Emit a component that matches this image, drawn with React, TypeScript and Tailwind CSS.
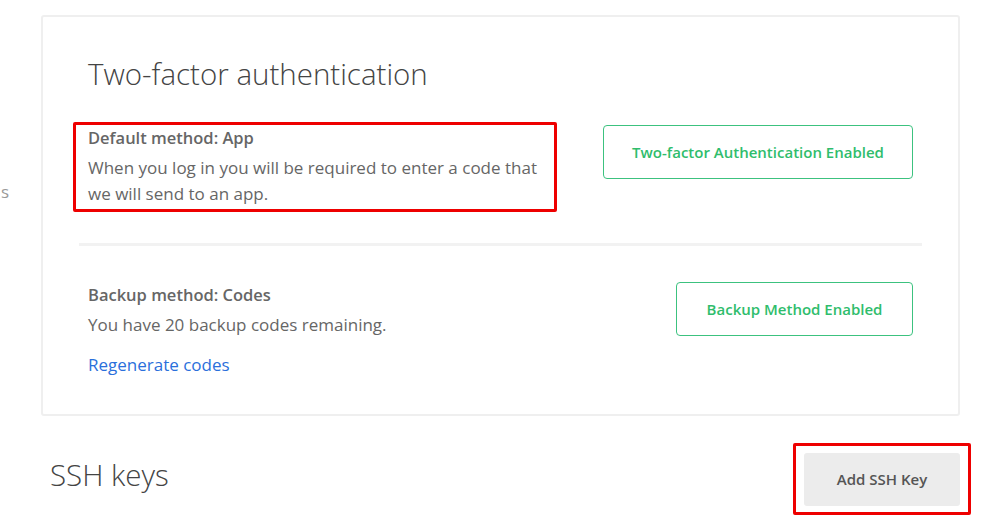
import React from 'react';

const font = { fontFamily: '"Open Sans", "Liberation Sans", sans-serif' };

interface MethodRowProps {
  title: string;
  lines: string[];
  link?: string;
  button: string;
  buttonWidth: string;
  highlight?: boolean;
}

function MethodRow({ title, lines, link, button, buttonWidth, highlight }: MethodRowProps) {
  return (
    <div className="flex items-start justify-between px-[9px]">
      <div className="relative pt-[3px]">
        {highlight && (
          <div className="absolute left-[-15px] top-[-3px] w-[484px] h-[90px] border-[3px] border-[#ee0000] rounded-[2px] pointer-events-none" />
        )}
        <p className="text-[16.5px] leading-[20px] font-semibold text-[#666]">{title}</p>
        <p className="mt-[7px] text-[17px] leading-[26px] text-[#666]">
          {lines.map((l, i) => (
            <React.Fragment key={i}>
              {l}
              {i < lines.length - 1 && <br />}
            </React.Fragment>
          ))}
        </p>
        {link && (
          <a href="#" className="block mt-[14px] text-[17px] leading-[26px] text-[#2a6fdb]">
            {link}
          </a>
        )}
      </div>
      <button
        className={`${buttonWidth} h-[54px] shrink-0 rounded-[4px] border border-[#3cc27f] bg-white text-[15px] font-semibold text-[#2fbd6c]`}
      >
        {button}
      </button>
    </div>
  );
}

export default function App() {
  return (
    <div className="w-[992px] h-[518px] overflow-hidden bg-white flex" style={font}>
      {/* cut-off sidebar */}
      <div className="w-[41px] shrink-0 overflow-hidden">
        <span className="block mt-[179px] ml-[1px] text-[17px] leading-[26px] text-[#999]">s</span>
      </div>

      <div className="flex-1">
        {/* Two-factor card */}
        <div className="mt-[15px] w-[919px] h-[401px] rounded-[3px] border-2 border-[#efefef] px-[36px]">
          <h2 className="ml-[9px] mt-[37px] text-[29.5px] leading-[40px] font-light text-[#444]">
            Two-factor authentication
          </h2>

          <div className="mt-[31px]">
            <MethodRow
              title="Default method: App"
              lines={['When you log in you will be required to enter a code that', 'we will send to an app.']}
              button="Two-factor Authentication Enabled"
              buttonWidth="w-[310px]"
              highlight
            />
          </div>

          <div className="mt-[36px] h-[3px] bg-[#f2f2f2]" />

          <div className="mt-[36px]">
            <MethodRow
              title="Backup method: Codes"
              lines={['You have 20 backup codes remaining.']}
              link="Regenerate codes"
              button="Backup Method Enabled"
              buttonWidth="w-[237px]"
            />
          </div>
        </div>

        {/* SSH keys */}
        <div className="mt-[37px] flex items-start justify-between w-[919px]">
          <h2 className="ml-[9px] mt-[2px] text-[29.5px] leading-[40px] font-light text-[#444]">SSH keys</h2>
          <div className="relative">
            <div className="absolute -left-[11px] -top-[10px] w-[178px] h-[72px] border-[3px] border-[#ee0000] rounded-[2px]" />
            <button className="w-[156px] h-[53px] rounded-[3px] bg-[#ececec] text-[15px] font-semibold text-[#555]">
              Add SSH Key
            </button>
          </div>
        </div>
      </div>
    </div>
  );
}
